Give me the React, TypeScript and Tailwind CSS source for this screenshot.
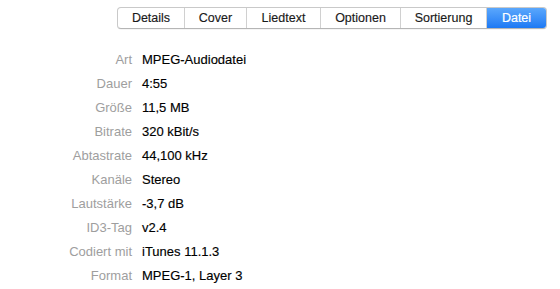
import React from "react";

const tabs = [
  { label: "Details", w: 68 },
  { label: "Cover", w: 62 },
  { label: "Liedtext", w: 74 },
  { label: "Optionen", w: 80 },
  { label: "Sortierung", w: 86 },
  { label: "Datei", w: 59 },
];

const rows: [string, string][] = [
  ["Art", "MPEG-Audiodatei"],
  ["Dauer", "4:55"],
  ["Größe", "11,5 MB"],
  ["Bitrate", "320 kBit/s"],
  ["Abtastrate", "44,100 kHz"],
  ["Kanäle", "Stereo"],
  ["Lautstärke", "-3,7 dB"],
  ["ID3-Tag", "v2.4"],
  ["Codiert mit", "iTunes 11.1.3"],
  ["Format", "MPEG-1, Layer 3"],
];

export default function App() {
  return (
    <div
      className="w-[560px] h-[289px] bg-white overflow-hidden"
      style={{ fontFamily: '"Liberation Sans", Arial, sans-serif' }}
    >
      <div className="pt-[7px] pl-[117px]">
        <div className="flex h-[22px] w-fit rounded-[4px] border border-[#c9c9c9] border-b-[#b5b5b5] bg-white shadow-[0_0.5px_0.5px_rgba(0,0,0,0.08)] overflow-hidden">
          {tabs.map((t, i) => {
            const active = i === tabs.length - 1;
            return (
              <div
                key={t.label}
                className={
                  active
                    ? "flex items-center justify-center text-[12.5px] text-white bg-gradient-to-b from-[#5aa7fc] to-[#1c79f4] [-webkit-text-stroke:0.2px_white]"
                    : "flex items-center justify-center text-[12.5px] text-[#1a1a1a] border-r border-[#d0d0d0] [-webkit-text-stroke:0.15px_#1a1a1a]"
                }
                style={{ width: i === 0 ? t.w - 1 : t.w }}
              >
                {t.label}
              </div>
            );
          })}
        </div>
      </div>
      <div className="mt-[19px] flex flex-col">
        {rows.map(([k, v]) => (
          <div key={k} className="flex h-[24px] items-center text-[13px] leading-[24px]">
            <div className="w-[132px] text-right text-[#9e9e9e]">{k}</div>
            <div className="ml-[10px] text-black [-webkit-text-stroke:0.15px_black]">{v}</div>
          </div>
        ))}
      </div>
    </div>
  );
}
